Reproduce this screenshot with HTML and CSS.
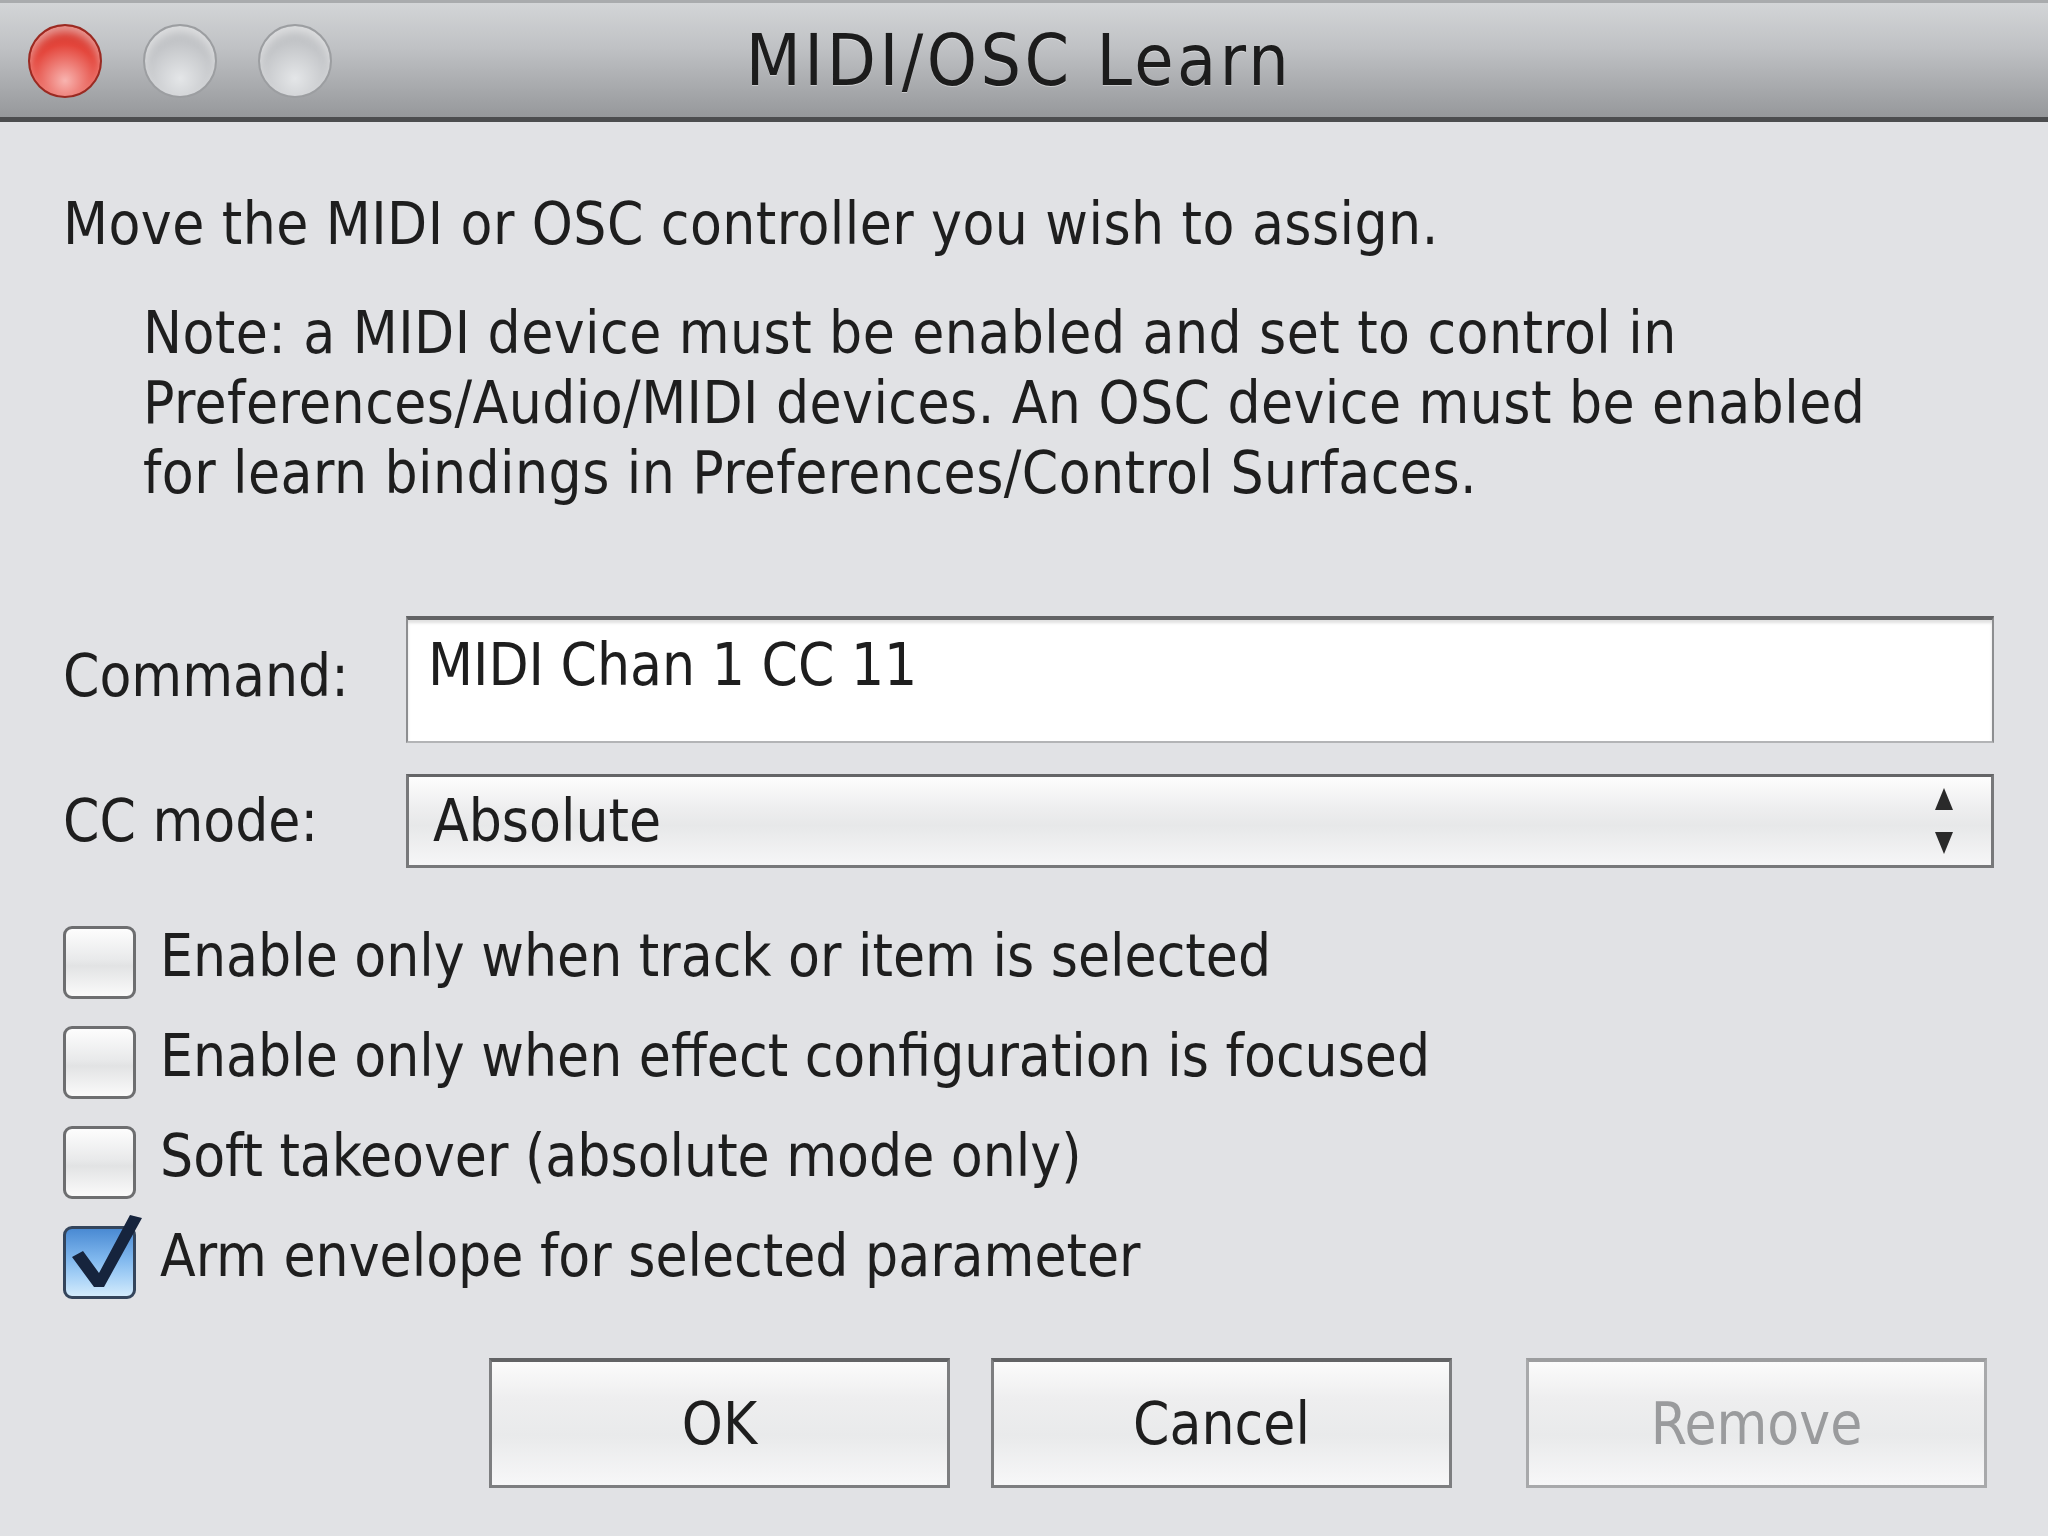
FILE: index.html
```html
<!DOCTYPE html>
<html lang="en">
<head>
    <meta charset="UTF-8">
    <title>MIDI/OSC Learn</title>
    <link rel="stylesheet" href="styles.css">
</head>
<body>
    <div class="window">
        <div class="titlebar">
            <div class="lights">
                <span class="light close"></span>
                <span class="light"></span>
                <span class="light"></span>
            </div>
            <div class="title">MIDI/OSC Learn</div>
        </div>

        <div class="content">
            <p class="intro">Move the MIDI or OSC controller you wish to assign.</p>
            <p class="note">Note: a MIDI device must be enabled and set to control in<br>
                Preferences/Audio/MIDI devices. An OSC device must be enabled<br>
                for learn bindings in Preferences/Control Surfaces.</p>

            <div class="row row-command">
                <label class="label">Command:</label>
                <div class="textbox">MIDI Chan 1 CC 11</div>
            </div>

            <div class="row row-mode">
                <label class="label">CC mode:</label>
                <div class="select">
                    <span>Absolute</span>
                    <svg class="arrows" width="22" height="70" viewBox="0 0 22 70">
                        <polygon points="11,2 20,24 2,24" fill="#2a2a2a"/>
                        <polygon points="2,46 20,46 11,68" fill="#2a2a2a"/>
                    </svg>
                </div>
            </div>

            <div class="checks">
                <div class="check">
                    <span class="box"></span>
                    <span class="check-label">Enable only when track or item is selected</span>
                </div>
                <div class="check">
                    <span class="box"></span>
                    <span class="check-label">Enable only when effect configuration is focused</span>
                </div>
                <div class="check">
                    <span class="box"></span>
                    <span class="check-label">Soft takeover (absolute mode only)</span>
                </div>
                <div class="check">
                    <span class="box checked">
                        <svg class="tick" width="74" height="72" viewBox="0 0 74 72">
                            <polygon points="9,31 20,25 36,47 67,-11 79,-8 41,61 31,61" fill="#16243d"/>
                        </svg>
                    </span>
                    <span class="check-label">Arm envelope for selected parameter</span>
                </div>
            </div>

            <div class="buttons">
                <button class="btn btn-ok">OK</button>
                <button class="btn btn-cancel">Cancel</button>
                <button class="btn btn-remove" disabled>Remove</button>
            </div>
        </div>
    </div>
</body>
</html>
```

FILE: styles.css
```css
body {
    margin: 0;
    background-color: #e1e2e5;
    font-family: "DejaVu Sans Condensed", "DejaVu Sans", sans-serif;
    color: #1e1e1e;
}
.window {
    width: 2048px;
    height: 1536px;
    overflow: hidden;
}

/* title bar */
.titlebar {
    height: 114px;
    display: grid;
    grid-template-columns: 1fr auto 1fr;
    align-items: center;
    border-top: 3px solid #a9abad;
    border-bottom: 5px solid #4c4d4f;
    background: linear-gradient(#d3d5d7, #bfc1c4 40%, #96989b);
}
.lights {
    display: flex;
    gap: 41px;
    padding-left: 28px;
    padding-top: 2px;
}
.light {
    width: 74px;
    height: 74px;
    border-radius: 50%;
    box-sizing: border-box;
    border: 2px solid #9c9ea1;
    background: radial-gradient(circle at 50% 75%, #e4e6e8, #c4c6c9 55%, #b4b6b9);
    box-shadow: inset 0 6px 8px rgba(255, 255, 255, 0.5);
}
.light.close {
    border-color: #9a2a22;
    background: radial-gradient(circle at 50% 78%, #f8b4b0, #e4463c 55%, #c0261c);
}
.title {
    font-size: 71px;
    letter-spacing: 3.5px;
    color: #1c1c1c;
    padding-right: 10px;
    text-shadow: 0 1px 0 rgba(255, 255, 255, 0.4);
}

/* body */
.content {
    padding: 0 54px 0 63px;
    font-size: 58px;
}
p {
    margin: 0;
    line-height: 70px;
    letter-spacing: 0.45px;
}
.intro {
    margin-top: 67px;
}
.note {
    margin-top: 39px;
    padding-left: 80px;
}

.row {
    display: flex;
}
.label {
    width: 343px;
    flex-shrink: 0;
    line-height: 70px;
}
.row-command {
    margin-top: 108px;
}
.row-command .label {
    padding-top: 25px;
}
.textbox {
    flex: 1;
    height: 127px;
    box-sizing: border-box;
    padding: 10px 20px 0 20px;
    line-height: 70px;
    background: #fff;
    border: 2px solid #8d8e90;
    border-top: 4px solid #626365;
    border-bottom-color: #b3b4b6;
    box-shadow: inset 0 3px 3px rgba(0, 0, 0, 0.12);
}
.row-mode {
    margin-top: 31px;
    align-items: center;
}
.select {
    flex: 1;
    height: 94px;
    box-sizing: border-box;
    display: flex;
    align-items: center;
    justify-content: space-between;
    padding: 0 36px 0 24px;
    line-height: 70px;
    border: 3px solid #77787a;
    border-top-color: #646567;
    background: linear-gradient(#fdfdfd, #eeeeef 35%, #e7e8e9 55%, #f6f6f7);
}
.arrows {
    display: block;
}

/* checkboxes */
.checks {
    margin-top: 58px;
    display: flex;
    flex-direction: column;
    gap: 27px;
}
.check {
    display: flex;
    align-items: flex-start;
}
.box {
    position: relative;
    width: 73px;
    height: 73px;
    flex-shrink: 0;
    box-sizing: border-box;
    border: 3px solid #6d6e70;
    border-radius: 9px;
    background: linear-gradient(#fdfdfd, #e9eaeb 45%, #e2e3e4 55%, #fafafa);
}
.box.checked {
    border-color: #34455c;
    background: linear-gradient(#4a8ad3, #80b8ee 45%, #a5d0f6 70%, #d3ebfc);
}
.tick {
    position: absolute;
    left: -3px;
    top: -3px;
    overflow: visible;
}
.check-label {
    margin-left: 24px;
    line-height: 60px;
}

/* buttons */
.buttons {
    margin-top: 59px;
    display: flex;
    padding-left: 426px;
}
.btn {
    width: 461px;
    height: 130px;
    font-family: inherit;
    font-size: 58px;
    color: #1e1e1e;
    border: 3px solid #7d7e80;
    border-top: 4px solid #626365;
    background: linear-gradient(#fbfbfb, #eeeeef 30%, #e9eaeb 60%, #f7f7f8);
}
.btn-cancel {
    margin-left: 41px;
}
.btn-remove {
    margin-left: 74px;
    color: #9a9b9d;
    border-color: #a8a9ab;
    border-top-color: #9c9d9f;
}
```
